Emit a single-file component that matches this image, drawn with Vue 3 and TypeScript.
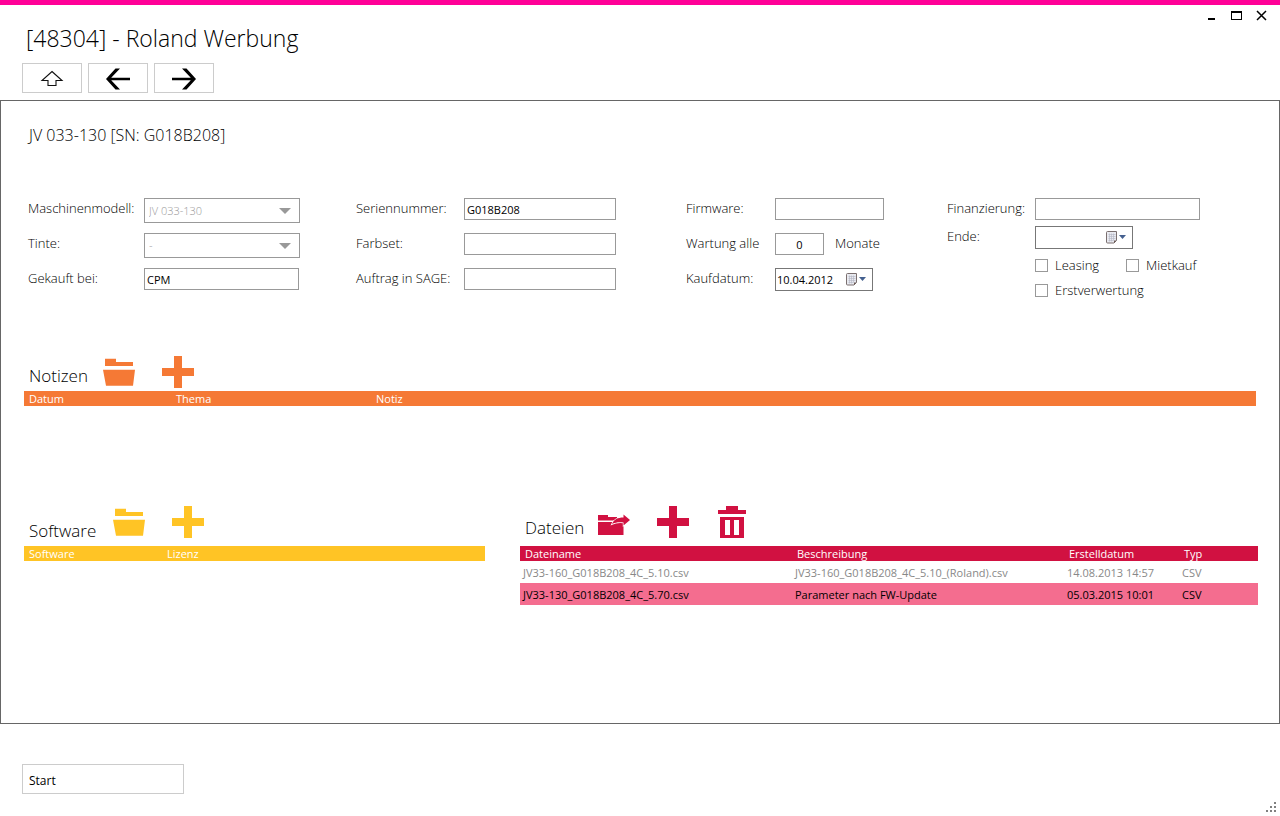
<script setup lang="ts">
import { ref } from 'vue'

interface FileRow {
  name: string
  description: string
  created: string
  type: string
}

const model = ref('JV 033-130')
const ink = ref('-')
const boughtFrom = ref('CPM')
const serial = ref('G018B208')
const colorSet = ref('')
const sageOrder = ref('')
const firmware = ref('')
const interval = ref('0')
const purchaseDate = ref('10.04.2012')
const financing = ref('')
const endDate = ref('')
const leasing = ref(false)
const hirePurchase = ref(false)
const firstUse = ref(false)

const files: FileRow[] = [
  { name: 'JV33-160_G018B208_4C_5.10.csv', description: 'JV33-160_G018B208_4C_5.10_(Roland).csv', created: '14.08.2013 14:57', type: 'CSV' },
  { name: 'JV33-130_G018B208_4C_5.70.csv', description: 'Parameter nach FW-Update', created: '05.03.2015 10:01', type: 'CSV' },
]
const selected = ref(1)
</script>

<template>
  <div class="window">
    <header class="top">
      <div class="title-bar">
        <h1>[48304] - Roland Werbung</h1>
        <div class="controls">
          <button type="button" aria-label="Minimieren">
            <svg width="11" height="11" viewBox="0 0 11 11"><path d="M2 8h7v2H2z" /></svg>
          </button>
          <button type="button" aria-label="Maximieren">
            <svg width="11" height="11" viewBox="0 0 11 11"><path fill-rule="evenodd" d="M0 1h11v9H0zM1 3v6h9V3z" /></svg>
          </button>
          <button type="button" aria-label="Schließen">
            <svg width="11" height="11" viewBox="0 0 11 11"><path d="M1 1l9 9m0-9l-9 9" fill="none" stroke="#000" stroke-width="1.500" /></svg>
          </button>
        </div>
      </div>
      <nav class="nav">
        <button type="button" aria-label="Nach oben">
          <svg width="24" height="24" viewBox="0 0 24 24"><path d="M12 5.500L22 14.500H16V19.500H8V14.500H2z" fill="none" stroke="#111" stroke-width="1.100" /></svg>
        </button>
        <button type="button" aria-label="Zurück">
          <svg width="24" height="24" viewBox="0 0 24 24"><path d="M0 13L9.500 2.500H14L5.200 11.800H24v2.400H5.200L14 23.500H9.500z" /></svg>
        </button>
        <button type="button" aria-label="Vor">
          <svg width="24" height="24" viewBox="0 0 24 24"><path d="M24 13L14.500 2.500H10L18.800 11.800H0v2.400H18.800L10 23.500H14.500z" /></svg>
        </button>
      </nav>
    </header>

    <main class="panel">
      <h2>JV 033-130 [SN: G018B208]</h2>

      <form class="form" @submit.prevent>
        <div class="group g1">
          <label for="model">Maschinenmodell:</label>
          <div class="combo">
            <select id="model" v-model="model" disabled><option>JV 033-130</option></select>
            <svg width="12" height="6" viewBox="0 0 12 6"><path d="M0 0h12L6 6z" fill="#999" /></svg>
          </div>
          <label for="ink">Tinte:</label>
          <div class="combo">
            <select id="ink" v-model="ink" disabled><option>-</option></select>
            <svg width="12" height="6" viewBox="0 0 12 6"><path d="M0 0h12L6 6z" fill="#999" /></svg>
          </div>
          <label for="bought">Gekauft bei:</label>
          <input id="bought" v-model="boughtFrom" class="box" type="text" />
        </div>

        <div class="group g2">
          <label for="serial">Seriennummer:</label>
          <input id="serial" v-model="serial" class="box" type="text" />
          <label for="colors">Farbset:</label>
          <input id="colors" v-model="colorSet" class="box" type="text" />
          <label for="sage">Auftrag in SAGE:</label>
          <input id="sage" v-model="sageOrder" class="box" type="text" />
        </div>

        <div class="group g3">
          <label for="firmware">Firmware:</label>
          <input id="firmware" v-model="firmware" class="box" type="text" />
          <label for="interval">Wartung alle</label>
          <div class="with-unit">
            <input id="interval" v-model="interval" class="box short" type="text" />
            <span class="unit">Monate</span>
          </div>
          <label for="purchase">Kaufdatum:</label>
          <div class="date">
            <input id="purchase" v-model="purchaseDate" type="text" />
            <button type="button" aria-label="Kalender öffnen">
              <svg width="20" height="13" viewBox="0 0 20 13">
                <path d="M1.500 .5h9v9l-2.500 2.500H1.500a1 1 0 0 1-1-1v-9.500a1 1 0 0 1 1-1z" fill="#e9eaf0" stroke="#7a6f6f" />
                <path d="M2.500 3.500h7M2.500 5.500h7M2.500 7.500h7M2.500 9.500h5M3.500 2.500v8M5.500 2.500v8M7.500 2.500v7" stroke="#b3b6c4" stroke-width=".6" />
                <path d="M10.500 9.500l-2.500 2.500v-2.500z" fill="#6b5a56" />
                <path d="M13 4h7l-3.500 4z" fill="#44608f" />
              </svg>
            </button>
          </div>
        </div>

        <div class="group g4">
          <label for="financing">Finanzierung:</label>
          <input id="financing" v-model="financing" class="box" type="text" />
          <label for="end">Ende:</label>
          <div class="date">
            <input id="end" v-model="endDate" type="text" />
            <button type="button" aria-label="Kalender öffnen">
              <svg width="20" height="13" viewBox="0 0 20 13">
                <path d="M1.500 .5h9v9l-2.500 2.500H1.500a1 1 0 0 1-1-1v-9.500a1 1 0 0 1 1-1z" fill="#e9eaf0" stroke="#7a6f6f" />
                <path d="M2.500 3.500h7M2.500 5.500h7M2.500 7.500h7M2.500 9.500h5M3.500 2.500v8M5.500 2.500v8M7.500 2.500v7" stroke="#b3b6c4" stroke-width=".6" />
                <path d="M10.500 9.500l-2.500 2.500v-2.500z" fill="#6b5a56" />
                <path d="M13 4h7l-3.500 4z" fill="#44608f" />
              </svg>
            </button>
          </div>
          <div class="checks">
            <label class="check"><input v-model="leasing" type="checkbox" />Leasing</label>
            <label class="check"><input v-model="hirePurchase" type="checkbox" />Mietkauf</label>
            <label class="check wide"><input v-model="firstUse" type="checkbox" />Erstverwertung</label>
          </div>
        </div>
      </form>

      <section class="notes">
        <div class="section-head">
          <h3>Notizen</h3>
          <button type="button" aria-label="Notiz öffnen">
            <svg width="32" height="32" viewBox="0 0 32 32"><path d="M2 2.700h11v3.300h17v4H2zM0 13.700h32l-2 16H3z" /></svg>
          </button>
          <button type="button" aria-label="Notiz hinzufügen">
            <svg width="32" height="32" viewBox="0 0 32 32"><path d="M12 0h8v12h12v8H20v12h-8V20H0v-8h12z" /></svg>
          </button>
        </div>
        <table>
          <thead>
            <tr><th class="c-date">Datum</th><th class="c-topic">Thema</th><th>Notiz</th></tr>
          </thead>
        </table>
      </section>

      <div class="lower">
        <section class="software">
          <div class="section-head">
            <h3>Software</h3>
            <button type="button" aria-label="Software öffnen">
              <svg width="32" height="32" viewBox="0 0 32 32"><path d="M2 2.700h11v3.300h17v4H2zM0 13.700h32l-2 16H3z" /></svg>
            </button>
            <button type="button" aria-label="Software hinzufügen">
              <svg width="32" height="32" viewBox="0 0 32 32"><path d="M12 0h8v12h12v8H20v12h-8V20H0v-8h12z" /></svg>
            </button>
          </div>
          <table>
            <thead>
              <tr><th class="c-soft">Software</th><th>Lizenz</th></tr>
            </thead>
          </table>
        </section>

        <section class="files">
          <div class="section-head">
            <h3>Dateien</h3>
            <button type="button" aria-label="Datei öffnen">
              <svg width="32" height="32" viewBox="0 0 32 32">
                <path d="M0 9h10v2h9v3.500H0zM0 16h25.500v13H0z" />
                <path d="M14 18C16 13.500 19.500 11.500 25.500 11.500V8.500L32 14l-6.500 5.500v-3C20.500 16 17 16.500 14 18z" stroke="#fff" stroke-width="1.400" paint-order="stroke" />
              </svg>
            </button>
            <button type="button" aria-label="Datei hinzufügen">
              <svg width="32" height="32" viewBox="0 0 32 32"><path d="M12 0h8v12h12v8H20v12h-8V20H0v-8h12z" /></svg>
            </button>
            <button type="button" aria-label="Datei löschen">
              <svg width="32" height="32" viewBox="0 0 32 32"><path fill-rule="evenodd" d="M10 0h12v4h8v4H2V4h8zM4 11h24v21H4zM9 14v15h5V14zM18 14v15h5V14z" /></svg>
            </button>
          </div>
          <table>
            <thead>
              <tr><th class="c-file">Dateiname</th><th class="c-file">Beschreibung</th><th class="c-created">Erstelldatum</th><th>Typ</th></tr>
            </thead>
            <tbody>
              <tr v-for="(file, i) in files" :key="file.name" :class="{ selected: i === selected }" @click="selected = i">
                <td>{{ file.name }}</td>
                <td>{{ file.description }}</td>
                <td>{{ file.created }}</td>
                <td>{{ file.type }}</td>
              </tr>
            </tbody>
          </table>
        </section>
      </div>
    </main>

    <footer class="bottom">
      <button type="button" class="start">Start</button>
      <svg class="grip" width="10" height="10" viewBox="0 0 10 10"><path d="M8 0h2v2H8zM4 4h2v2H4zM8 4h2v2H8zM0 8h2v2H0zM4 8h2v2H4zM8 8h2v2H8z" fill="#808080" /></svg>
    </footer>
  </div>
</template>

<style>
body {
  margin: 0;
  background: #fff;
}
</style>

<style scoped>
.window,
.window * {
  box-sizing: border-box;
}
.window {
  display: flex;
  flex-direction: column;
  min-height: 100vh;
  border-top: 5px solid #ff0097;
  background: #fff;
  color: #000;
  font-family: "Open Sans", "Noto Sans", sans-serif;
  font-size: 13px;
  font-weight: 300;
}
h1,
h2,
h3 {
  margin: 0;
  font-weight: 300;
}
button {
  margin: 0;
  padding: 0;
  border: 0;
  background: none;
  color: inherit;
  font: inherit;
}
svg {
  display: block;
}
.title-bar {
  display: flex;
  justify-content: space-between;
  height: 58px;
  padding: 0 13px 0 26px;
}
h1 {
  padding-top: 17px;
  font-size: 23px;
  line-height: 32px;
}
.controls {
  display: flex;
  align-items: flex-start;
  gap: 14px;
  padding-top: 5px;
}
.nav {
  display: flex;
  gap: 6px;
  padding: 0 22px 7px;
}
.nav button {
  display: grid;
  place-items: center;
  width: 60px;
  height: 30px;
  border: 1px solid #ccc;
}
.panel {
  flex: 1;
  padding: 22px 23px 0 23px;
  border: 1px solid #666;
}
h2 {
  padding-left: 5px;
  font-size: 16px;
  line-height: 24px;
}
.form {
  display: grid;
  grid-template-columns: 328px 330px 261px 1fr;
  margin-top: 51px;
  padding-left: 4px;
}
.group {
  display: grid;
  grid-auto-rows: 35px;
  align-content: start;
  align-items: start;
  justify-content: start;
}
.g1 {
  grid-template-columns: 116px 156px;
}
.g2 {
  grid-template-columns: 108px 152px;
}
.g3 {
  grid-template-columns: 89px 109px;
}
.g4 {
  grid-template-columns: 88px 165px;
  grid-auto-rows: 28px;
}
label,
.unit {
  line-height: 20px;
  white-space: nowrap;
}
.box {
  width: 100%;
  height: 22px;
  padding: 0 2px;
  border: 1px solid #999;
  background: #fff;
  color: #000;
  font: inherit;
  font-size: 11px;
  font-weight: 400;
}
.g1 .box {
  width: 155px;
}
.combo {
  position: relative;
}
.combo select {
  display: block;
  width: 100%;
  height: 25px;
  padding: 0 4px;
  border: 1px solid #999;
  border-radius: 0;
  background: #fff;
  color: #999;
  font: inherit;
  font-size: 11px;
  opacity: 1;
  appearance: none;
}
.combo svg {
  position: absolute;
  top: 10px;
  right: 9px;
  pointer-events: none;
}
.with-unit {
  display: flex;
  gap: 11px;
}
.box.short {
  width: 49px;
  flex: none;
  text-align: center;
}
.date {
  display: flex;
  align-items: center;
  width: 98px;
  height: 23px;
  padding: 0 6px 0 1px;
  border: 1px solid #777;
}
.date input {
  flex: 1;
  min-width: 0;
  padding: 0;
  border: 0;
  background: none;
  color: #000;
  font: inherit;
  font-size: 11px;
  font-weight: 400;
}
.checks {
  grid-column: 2;
  display: grid;
  grid-template-columns: 91px auto;
  row-gap: 5px;
  justify-content: start;
  padding-top: 1px;
}
.check {
  display: flex;
  align-items: center;
  gap: 7px;
}
.check.wide {
  grid-column: 1 / -1;
}
.check input {
  flex: none;
  width: 13px;
  height: 13px;
  margin: 0;
  border: 1px solid #999;
  background: #fff;
  appearance: none;
}
.check input:checked {
  background: #666;
}
.section-head {
  display: flex;
  align-items: flex-start;
  padding-left: 5px;
}
.section-head button + button {
  margin-left: 27px;
}
h3 {
  font-size: 17px;
  line-height: 24px;
}
.notes {
  margin-top: 53px;
  color: #f57935;
}
.software {
  color: #ffc425;
}
.files {
  color: #d11141;
}
.section-head svg {
  fill: currentColor;
}
.section-head h3 {
  color: #000;
}
.notes .section-head {
  height: 35px;
}
.notes h3 {
  width: 74px;
  padding-top: 8px;
}
.lower {
  display: grid;
  grid-template-columns: 461px 1fr;
  column-gap: 35px;
  margin-top: 100px;
  margin-right: -2px;
}
.lower .section-head {
  height: 40px;
}
.software h3 {
  width: 84px;
  padding-top: 13px;
}
.files h3 {
  width: 73px;
  padding-top: 10px;
}
table {
  width: 100%;
  border-collapse: collapse;
  table-layout: fixed;
  font-size: 11px;
  font-weight: 400;
}
th {
  height: 15px;
  padding: 0 0 0 5px;
  color: #fff;
  font-weight: 400;
  line-height: 15px;
  text-align: left;
}
.notes th {
  background: #f57935;
}
.software th {
  background: #ffc425;
}
.files th {
  background: #d11141;
}
td {
  height: 22px;
  padding: 2px 0 0 3px;
  color: #888;
  line-height: 20px;
  white-space: nowrap;
}
.selected td {
  background: #f46d8f;
  color: #000;
}
.c-date {
  width: 147px;
}
.c-topic {
  width: 200px;
}
.c-soft {
  width: 138px;
}
.c-file {
  width: 272px;
}
.c-created {
  width: 115px;
}
.bottom {
  display: flex;
  align-items: flex-end;
  justify-content: space-between;
  height: 92px;
  padding: 0 4px 0 22px;
}
.start {
  width: 162px;
  height: 30px;
  margin-bottom: 22px;
  padding: 2px 6px 0;
  border: 1px solid #ccc;
  font-weight: 400;
  font-size: 12px;
  text-align: left;
}
.grip {
  margin-bottom: 4px;
}
</style>
